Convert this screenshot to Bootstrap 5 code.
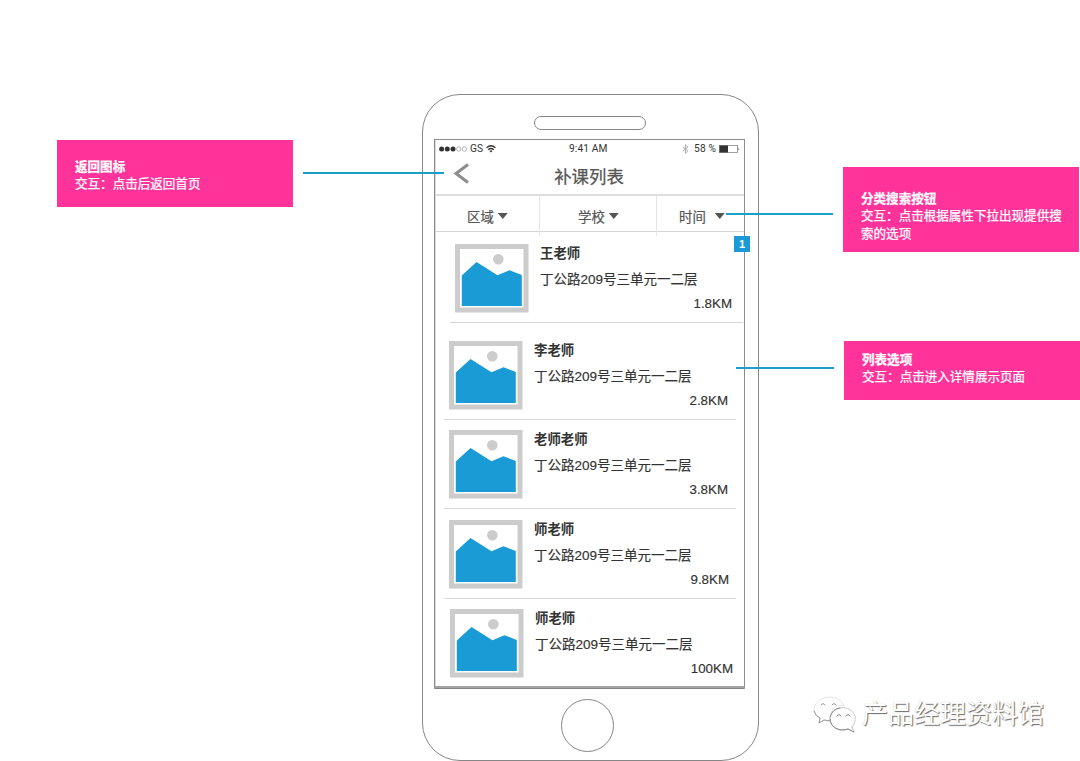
<!DOCTYPE html>
<html lang="zh-CN">
<head>
<meta charset="utf-8">
<meta name="viewport" content="width=device-width, initial-scale=1">
<title>补课列表</title>
<link href="https://cdn.jsdelivr.net/npm/bootstrap@5.3.0/dist/css/bootstrap.min.css" rel="stylesheet">
<style>
  body { font-family: "Liberation Sans", "Noto Sans CJK SC", sans-serif; background: #fff; color: #333; overflow: hidden; }
  .board { width: 1080px; height: 761px; }
  .side-left { width: 422px; padding: 140px 0 0 57px; }
  .side-right { width: 322px; padding: 167px 0 0 85px; }
  .note { width: 236px; background: #ff3399; color: #fff; font-size: 12.55px; line-height: 17.6px; padding-left: 18px; padding-right: 14px; -webkit-text-stroke: .25px #fff; }
  .note-back { height: 67px; padding-top: 18.600px; }
  .note-filter { height: 85px; padding-top: 23.600px; }
  .note-list { height: 59px; margin: 89px 0 0 1px; padding-top: 10.600px; }
  .wire { position: absolute; height: 2px; background: #1a9fc6; z-index: 2; }
  .wire-back { left: 303px; top: 172px; width: 141px; }
  .wire-filter { left: 726px; top: 213px; width: 107px; }
  .wire-list { left: 736px; top: 367px; width: 98px; }
  .phone { width: 337px; height: 667px; margin-top: 94px; margin-right: -1px; border: 1px solid #868686; border-radius: 38px; padding: 21px 0 0 11px; }
  .speaker { width: 112px; height: 14px; margin-left: 100px; border: 1px solid #868686; border-radius: 7px; }
  .screen { width: 311px; height: 550px; margin: 9px 0 10px; border: 1px solid #8c8c8c; border-bottom: 3px solid #a4a4a4; box-shadow: inset 1px 0 0 #d9d9d9; }
  .screen::after { content: ""; position: absolute; left: 0; right: 0; bottom: -3px; height: 1px; background: #858585; }
  .home-key { width: 53px; height: 53px; margin-left: 127px; border: 1px solid #868686; border-radius: 50%; }
  .status { height: 18px; padding: 0 4px 0 4px; font-family: Roboto, sans-serif; font-size: 10.2px; line-height: 18px; letter-spacing: .12px; }
  .clock { position: absolute; left: 134px; top: 0; }
  .title-row { height: 38px; border-bottom: 2px solid #dedede; }
  .title-row .caption { font-size: 17.4px; line-height: 38px; color: #555; -webkit-text-stroke: .25px #555; margin-left: -1px; }
  .filters { height: 36px; border-bottom: 1px solid #d5d5d5; font-size: 13.4px; color: #555; line-height: 40px; -webkit-text-stroke: .2px #555; }
  .filters > div { height: 40px; margin-bottom: -4px; }
  .filters > div + div { border-left: 1px solid #e6e6e6; }
  .word { padding-top: 2px; margin-bottom: -2px; }
  .caret { width: 10px; height: 6px; background: #555; clip-path: polygon(0 0, 100% 0, 50% 100%); }
  .teacher { padding-left: 9px; }
  .teacher .rule { height: 1px; width: 292px; background: #d8d8d8; }
  .thumb { width: 74px; height: 69px; margin-left: 5px; display: block; }
  .info { width: 194px; margin-left: 11px; }
  .who { font-size: 13.4px; font-weight: 700; line-height: 20px; }
  .addr { font-size: 13.5px; line-height: 32px; -webkit-text-stroke: .15px #333; }
  .dist { font-size: 13.33px; line-height: 16px; -webkit-text-stroke: .15px #333; }
  .shifted { padding-left: 15px; }
  .shifted .info { width: 192px; }
  .shifted .rule { width: 293px; }
  .marker { position: absolute; left: 299px; top: 96px; width: 16px; height: 16px; background: #1a9bd7; color: #fff; font-size: 11px; font-weight: 700; line-height: 16px; z-index: 1; }
  .brand { margin: 294px 0 0 -30px; color: #fff; font-size: 26px; line-height: 40px; text-shadow: 1px 1px 1px #6a6a6a, 0 0 1px #c4c4c4; }
</style>
</head>
<body>
<svg class="d-none">
  <symbol id="photo" viewBox="0 0 74 69">
    <rect width="73.500" height="68.500" fill="#ccc"/>
    <rect x="5" y="5" width="63.500" height="58.500" fill="#fff"/>
    <circle cx="43.300" cy="15.300" r="5.300" fill="#ccc"/>
    <path d="M6.800 31.500 21.500 18 42.500 31.200 54.500 26.200 66.800 31V62H6.800z" fill="#1a9bd5"/>
  </symbol>
</svg>
<main class="board d-flex position-relative">
  <aside class="side-left flex-shrink-0">
    <div class="note note-back"><div class="fw-bold">返回图标</div><div>交互：点击后返回首页</div></div>
  </aside>

  <section class="phone d-flex flex-column align-items-start flex-shrink-0">
    <div class="speaker flex-shrink-0"></div>
    <div class="screen position-relative flex-shrink-0">
      <div class="status d-flex align-items-center justify-content-between position-relative">
        <div class="d-flex align-items-center">
          <svg width="29" height="6" viewBox="0 0 29 6"><g fill="#333"><circle cx="2.600" cy="3" r="2.500"/><circle cx="8.300" cy="3" r="2.500"/><circle cx="14" cy="3" r="2.500"/></g><g fill="none" stroke="#888" stroke-width=".6"><circle cx="19.700" cy="3" r="2.200"/><circle cx="25.400" cy="3" r="2.200"/></g></svg>
          <span style="margin-left:2px">GS</span>
          <svg style="margin-left:3px" width="10" height="8" viewBox="0 0 10 8" fill="none" stroke="#333" stroke-width="1.300"><path d="M.6 2.800Q5-1.200 9.400 2.800M2.200 4.700Q5 2.200 7.800 4.700"/><path d="M3.500 5.900Q5 4.600 6.500 5.900L5 7.600z" fill="#333" stroke="none"/></svg>
        </div>
        <div class="clock">9:41 AM</div>
        <div class="d-flex align-items-center">
          <svg width="7" height="10" viewBox="0 0 7 10" fill="none" stroke="#999" stroke-width=".8"><path d="M.8 2.800 5.800 7 3.400 9.300V.7L5.800 3 .8 7.200"/></svg>
          <span style="margin-left:5px">58 %</span>
          <svg style="margin-left:3px" width="21" height="8" viewBox="0 0 21 8"><rect x=".5" y=".5" width="18" height="7" fill="#fff" stroke="#888" stroke-width=".8"/><rect x=".5" y=".5" width="8.500" height="7" fill="#333"/><path d="M19.500 2.500Q21 4 19.500 5.500z" fill="#333"/></svg>
        </div>
      </div>
      <div class="title-row d-flex justify-content-center position-relative">
        <svg class="position-absolute" style="left:18px;top:5px" width="17" height="21" viewBox="0 0 17 21" fill="none" stroke="#8c8c8c" stroke-width="3"><path d="M15 1.500 3 10.500 15 19.500"/></svg>
        <div class="caption">补课列表</div>
      </div>
      <div class="filters d-flex">
        <div class="d-flex align-items-center" style="width:104px;padding-left:32px"><span class="word">区域</span><span class="caret" style="margin-left:4px"></span></div>
        <div class="d-flex align-items-center" style="width:117px;padding-left:38px"><span class="word">学校</span><span class="caret" style="margin-left:4px"></span></div>
        <div class="d-flex align-items-center flex-grow-1" style="padding-left:22px"><span class="word">时间</span><span class="caret" style="margin-left:9px"></span></div>
      </div>
      <div class="marker text-center">1</div>

      <div class="teacher shifted" style="height:90px;padding-top:12px">
        <div class="d-flex" style="height:78px"><svg class="thumb"><use href="#photo"/></svg><div class="info"><div class="who">王老师</div><div class="addr">丁公路209号三单元一二层</div><div class="dist text-end">1.8KM</div></div></div>
        <div class="rule"></div>
      </div>
      <div class="teacher" style="height:97px;padding-top:19px">
        <div class="d-flex" style="height:78px"><svg class="thumb"><use href="#photo"/></svg><div class="info"><div class="who">李老师</div><div class="addr">丁公路209号三单元一二层</div><div class="dist text-end">2.8KM</div></div></div>
        <div class="rule"></div>
      </div>
      <div class="teacher" style="height:89px;padding-top:11px">
        <div class="d-flex" style="height:78px"><svg class="thumb"><use href="#photo"/></svg><div class="info"><div class="who">老师老师</div><div class="addr">丁公路209号三单元一二层</div><div class="dist text-end">3.8KM</div></div></div>
        <div class="rule"></div>
      </div>
      <div class="teacher" style="height:90px;padding-top:12px">
        <div class="d-flex" style="height:78px"><svg class="thumb"><use href="#photo"/></svg><div class="info" style="width:195px"><div class="who">师老师</div><div class="addr">丁公路209号三单元一二层</div><div class="dist text-end">9.8KM</div></div></div>
        <div class="rule"></div>
      </div>
      <div class="teacher" style="padding-left:10px;padding-top:11px">
        <div class="d-flex"><svg class="thumb"><use href="#photo"/></svg><div class="info" style="width:198px"><div class="who">师老师</div><div class="addr">丁公路209号三单元一二层</div><div class="dist text-end">100KM</div></div></div>
      </div>
    </div>
    <div class="home-key flex-shrink-0"></div>
  </section>

  <aside class="side-right flex-shrink-0">
    <div class="note note-filter"><div class="fw-bold">分类搜索按钮</div><div>交互：点击根据属性下拉出现提供搜索的选项</div></div>
    <div class="note note-list"><div class="fw-bold">列表选项</div><div>交互：点击进入详情展示页面</div></div>
    <div class="brand d-flex align-items-center text-nowrap">
      <svg width="43" height="38" viewBox="0 0 43 38" fill="none" stroke-linecap="round">
        <path d="M6 28 11 25Q17 27 21 24C14 12 25 9 31 11 26-2 4 0 1 13Q1 20 7 23z" stroke="#ddd" stroke-width=".8"/>
        <path d="M1 16Q2 21 7 23L6 28 11 25 17 26M8 10Q10 7 12 10M19 10Q21 7 23 10" stroke="#999"/>
        <path d="M39 32 41 37 35 34C26 38 17 32 17 24 18 10 38 9 42 21Q43 28 39 32z" fill="#fff" stroke="#bbb" stroke-width=".8"/>
        <path d="M17 24C17 32 26 37 35 34L41 37M17 22Q19 14 27 13M24 21Q26 18 28 21M33 21Q35 18 37 21" stroke="#888"/>
      </svg>
      <span style="margin-left:6px">产品经理资料馆</span>
    </div>
  </aside>

  <div class="wire wire-back"></div>
  <div class="wire wire-filter"></div>
  <div class="wire wire-list"></div>
</main>
<script src="https://cdn.jsdelivr.net/npm/bootstrap@5.3.0/dist/js/bootstrap.bundle.min.js"></script>
</body>
</html>
